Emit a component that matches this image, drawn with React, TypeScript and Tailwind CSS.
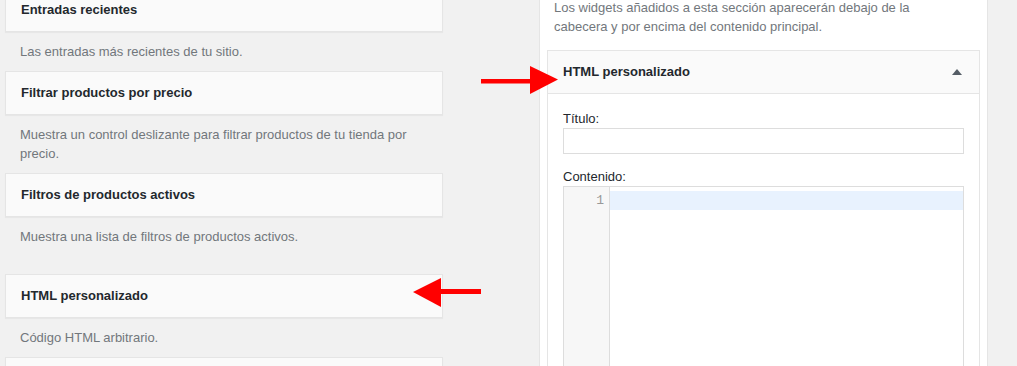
import React from "react";

const widgets = [
  { title: "Entradas recientes", desc: "Las entradas más recientes de tu sitio." },
  {
    title: "Filtrar productos por precio",
    desc: "Muestra un control deslizante para filtrar productos de tu tienda por precio.",
  },
  { title: "Filtros de productos activos", desc: "Muestra una lista de filtros de productos activos.", extra: true },
  { title: "HTML personalizado", desc: "Código HTML arbitrario." },
  // next widget sits below the fold, only its top edge shows
  { title: "", desc: "" },
];

function WidgetCard({ title, desc, extra }: { title: string; desc: string; extra?: boolean }) {
  return (
    <div>
      <div className="h-[44px] flex items-center px-[15px] bg-[#fafafa] border border-[#e5e5e5] shadow-[0_1px_1px_rgba(0,0,0,0.04)]">
        {title && <h3 className="text-[13px] font-bold text-[#23282d]">{title}</h3>}
      </div>
      {desc && (
        <p className={`px-[15px] pt-[10px] pb-[10px] text-[13px] leading-[19px] text-[#72777c] ${extra ? "mb-[18px]" : ""}`}>
          {desc}
        </p>
      )}
    </div>
  );
}

function Arrows() {
  return (
    <svg className="absolute inset-0 pointer-events-none" width="1017" height="366" viewBox="0 0 1017 366">
      <rect x="481" y="79" width="52" height="4.5" fill="#ff0000" />
      <polygon points="530,66 558,79.5 530,94" fill="#ff0000" />
      <rect x="438" y="289" width="43" height="5" fill="#ff0000" />
      <polygon points="413,292 441,278 441,307" fill="#ff0000" />
    </svg>
  );
}

export default function App() {
  return (
    <div className="relative w-[1017px] h-[366px] overflow-hidden bg-[#f1f1f1] flex font-['Liberation_Sans',Arial,sans-serif]">
      <div className="ml-[5px] -mt-[12px] w-[438px] shrink-0 flex flex-col">
        {widgets.map((w, i) => (
          <WidgetCard key={i} title={w.title} desc={w.desc} extra={w.extra} />
        ))}
      </div>

      <div className="ml-[96px] w-[449px] shrink-0 bg-white border-x border-[#e5e5e5] px-[7px]">
        <p className="-mt-[2px] pl-[7px] pr-[24px] text-[13px] leading-[19px] text-[#72777c]">
          Los widgets añadidos a esta sección aparecerán debajo de la cabecera y por encima del contenido principal.
        </p>

        <div className="mt-[14px] border border-[#e5e5e5] bg-white">
          <div className="h-[43px] flex items-center justify-between pl-[15px] pr-[17px] bg-[#fafafa] border-b border-[#e5e5e5]">
            <h3 className="text-[13px] font-bold text-[#23282d]">HTML personalizado</h3>
            <span className="w-0 h-0 border-l-[5px] border-r-[5px] border-b-[6px] border-l-transparent border-r-transparent border-b-[#555d66]" />
          </div>

          <div className="px-[15px] pt-[15px] pb-[20px]">
            <label className="block text-[13px] leading-[19px] text-[#23282d]">Título:</label>
            <input type="text" className="block w-full h-[26px] border border-[#dddddd] bg-white outline-none" />

            <label className="block mt-[13px] text-[13px] leading-[19px] text-[#23282d]">Contenido:</label>
            <div className="flex h-[200px] border border-[#dddddd] bg-white">
              <div className="w-[46px] shrink-0 bg-[#f7f7f7] border-r border-[#dddddd] pt-[4px] pr-[5px] text-right font-['Liberation_Mono',monospace] text-[13px] leading-[19px] text-[#999999]">
                1
              </div>
              <div className="flex-1 pt-[4px]">
                <div className="h-[19px] bg-[#e8f2fe]" />
              </div>
            </div>
          </div>
        </div>
      </div>

      <Arrows />
    </div>
  );
}
